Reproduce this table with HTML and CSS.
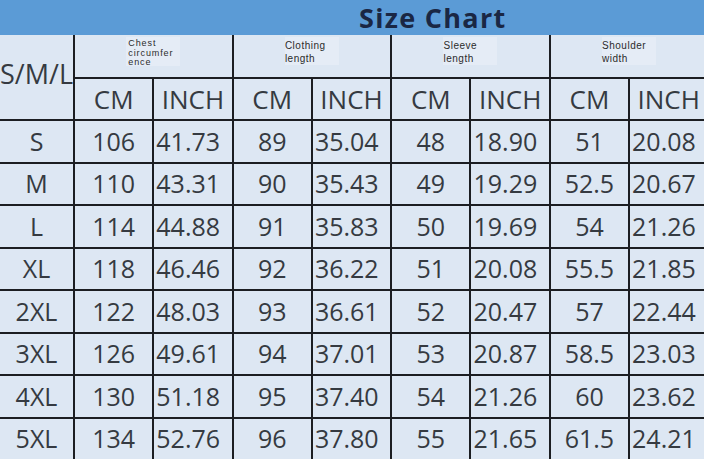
FILE: index.html
```html
<!DOCTYPE html>
<html>
<head>
<meta charset="utf-8">
<link rel="stylesheet" href="styles.css">
</head>
<body>
<div class="sheet">
  <div class="title"><span>Size Chart</span></div>
  <table class="chart">
    <colgroup>
      <col class="c-size">
      <col class="c-val"><col class="c-val"><col class="c-val"><col class="c-val">
      <col class="c-val"><col class="c-val"><col class="c-val"><col class="c-val">
    </colgroup>
    <thead>
      <tr class="h1">
        <th rowspan="2" class="sml">S/M/L</th>
        <th colspan="2"><div class="label tight">Chest<br>circumfer<br>ence</div></th>
        <th colspan="2"><div class="label">Clothing<br>length</div></th>
        <th colspan="2"><div class="label">Sleeve<br>length</div></th>
        <th colspan="2"><div class="label">Shoulder<br>width</div></th>
      </tr>
      <tr class="h2">
        <th>CM</th><th>INCH</th><th>CM</th><th>INCH</th><th>CM</th><th>INCH</th><th>CM</th><th>INCH</th>
      </tr>
    </thead>
    <tbody>
      <tr><td class="sz">S</td><td>106</td><td class="in">41.73</td><td>89</td><td class="in">35.04</td><td>48</td><td class="in">18.90</td><td>51</td><td class="in">20.08</td></tr>
      <tr><td class="sz">M</td><td>110</td><td class="in">43.31</td><td>90</td><td class="in">35.43</td><td>49</td><td class="in">19.29</td><td>52.5</td><td class="in">20.67</td></tr>
      <tr><td class="sz">L</td><td>114</td><td class="in">44.88</td><td>91</td><td class="in">35.83</td><td>50</td><td class="in">19.69</td><td>54</td><td class="in">21.26</td></tr>
      <tr><td class="sz">XL</td><td>118</td><td class="in">46.46</td><td>92</td><td class="in">36.22</td><td>51</td><td class="in">20.08</td><td>55.5</td><td class="in">21.85</td></tr>
      <tr><td class="sz">2XL</td><td>122</td><td class="in">48.03</td><td>93</td><td class="in">36.61</td><td>52</td><td class="in">20.47</td><td>57</td><td class="in">22.44</td></tr>
      <tr><td class="sz">3XL</td><td>126</td><td class="in">49.61</td><td>94</td><td class="in">37.01</td><td>53</td><td class="in">20.87</td><td>58.5</td><td class="in">23.03</td></tr>
      <tr><td class="sz">4XL</td><td>130</td><td class="in">51.18</td><td>95</td><td class="in">37.40</td><td>54</td><td class="in">21.26</td><td>60</td><td class="in">23.62</td></tr>
      <tr><td class="sz">5XL</td><td>134</td><td class="in">52.76</td><td>96</td><td class="in">37.80</td><td>55</td><td class="in">21.65</td><td>61.5</td><td class="in">24.21</td></tr>
    </tbody>
  </table>
</div>
</body>
</html>
```
FILE: styles.css
```css
html, body {
  margin: 0;
  padding: 0;
  background: #dde7f3;
}
.sheet {
  width: 704px;
  height: 459px;
  overflow: hidden;
  background: #dde7f3;
}
.title {
  height: 35px;
  background: #5b9bd6;
  padding-left: 359px;
  box-sizing: border-box;
  display: flex;
  align-items: center;
}
.title span {
  font-family: "Open Sans", sans-serif;
  font-weight: 700;
  font-size: 27px;
  letter-spacing: 1.3px;
  color: #1a2744;
  line-height: 1;
}
.chart {
  table-layout: fixed;
  border-collapse: collapse;
  width: 708.4px;
  font-family: "Open Sans", sans-serif;
  color: #353a41;
}
.c-size { width: 74px; }
.c-val { width: 79.3px; }
.chart th, .chart td {
  border: 2px solid #1c1e22;
  padding: 0;
  overflow: hidden;
  white-space: nowrap;
}
.chart tr > :first-child {
  border-left: 0;
}
.h1 th {
  border-top: 0;
  height: 42px;
  font-weight: 400;
  vertical-align: top;
}
.h2 th {
  height: 40px;
  font-size: 26px;
  font-weight: 400;
  text-align: center;
}
.h1 th.sml {
  font-size: 27px;
  font-weight: 400;
  text-align: left;
  vertical-align: middle;
  letter-spacing: 0;
  text-indent: 0;
  padding-bottom: 8px;
}
.label {
  width: 54px;
  height: 26px;
  margin: 2px auto 0;
  padding: 2px 0 0;
  text-align: left;
  font-family: "Liberation Sans", Arial, sans-serif;
  font-size: 10px;
  letter-spacing: 0.5px;
  line-height: 13px;
  color: #2b2b2b;
  background: #e5ecf6;
}
.label.tight {
  font-size: 9px;
  line-height: 9.5px;
  letter-spacing: 0.9px;
  padding: 2px 0 0 2px;
  width: 52px;
  height: 27px;
}
.chart td {
  height: 40.5px;
  font-size: 25px;
  text-align: center;
  line-height: 1;
}
.chart td.in {
  text-align: left;
  padding-left: 2px;
}
.chart td.sz {
  text-align: center;
}
```
